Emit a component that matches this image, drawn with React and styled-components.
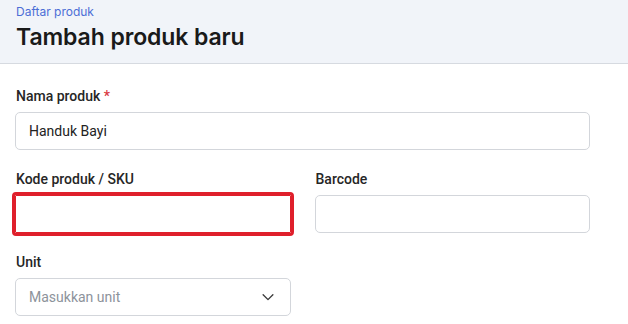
import React from "react";
import styled, { createGlobalStyle } from "styled-components";

const Global = createGlobalStyle`
  html, body { margin: 0; padding: 0; background: #ffffff; }
  * { box-sizing: border-box; }
`;

const Page = styled.div`
  width: 628px;
  min-height: 324px;
  background: #ffffff;
  font-family: Roboto, "Liberation Sans", sans-serif;
`;

const Header = styled.header`
  height: 64px;
  background: #f1f4f9;
  border-bottom: 1px solid #d6dae0;
  padding: 5px 16px 0;
  display: flex;
  flex-direction: column;
  font-family: Inter, "Liberation Sans", sans-serif;
`;

const Crumb = styled.a`
  font-size: 12px;
  line-height: 14px;
  color: #4c6ed6;
  text-decoration: none;
`;

const Title = styled.h1`
  margin: 4px 0 0;
  font-size: 23px;
  line-height: 29px;
  font-weight: 600;
  color: #1a1a1a;
  letter-spacing: -0.1px;
`;

const Form = styled.form`
  width: 590px;
  padding: 24px 0 0 15px;
  display: flex;
  flex-direction: column;
  gap: 21px;
`;

const Row = styled.div`
  display: grid;
  grid-template-columns: ${(p) => p.$cols || "1fr"};
  column-gap: 24px;
`;

const Field = styled.div`
  display: flex;
  flex-direction: column;
  gap: 8px;
`;

const Label = styled.label`
  font-size: 14px;
  line-height: 16px;
  font-weight: 500;
  color: #262626;
  padding-left: 1px;
`;

const Star = styled.span`
  color: #d9383f;
`;

const Input = styled.input`
  height: 38px;
  width: 100%;
  border: 1px solid #d3d6db;
  border-radius: 5px;
  padding: 0 13px;
  font-family: Roboto, "Liberation Sans", sans-serif;
  font-size: 14px;
  color: #222222;
  background: #ffffff;
  outline: ${(p) => (p.$error ? "3px solid #df1f2b" : "none")};
  ${(p) => p.$error && "border-radius: 1px; border-color: #df1f2b;"}
  &::placeholder { color: #8d939b; }
`;

const SelectBox = styled.div`
  height: 38px;
  border: 1px solid #d3d6db;
  border-radius: 5px;
  padding: 0 13px;
  display: flex;
  align-items: center;
  justify-content: space-between;
  font-size: 14px;
  color: #8d939b;
  background: #ffffff;
`;

const Chevron = styled.svg`
  width: 18px;
  height: 18px;
  margin-right: 0;
`;

export default function App() {
  return (
    <Page>
      <Global />
      <Header>
        <Crumb href="#">Daftar produk</Crumb>
        <Title>Tambah produk baru</Title>
      </Header>
      <Form onSubmit={(e) => e.preventDefault()}>
        <Field>
          <Label>
            Nama produk <Star>*</Star>
          </Label>
          <Input defaultValue="Handuk Bayi" />
        </Field>
        <Row $cols="1fr 1fr">
          <Field>
            <Label>Kode produk / SKU</Label>
            <Input $error />
          </Field>
          <Field>
            <Label>Barcode</Label>
            <Input />
          </Field>
        </Row>
        <Row $cols="1fr 1fr">
          <Field>
            <Label>Unit</Label>
            <SelectBox>
              <span>Masukkan unit</span>
              <Chevron viewBox="0 0 24 24" fill="none" stroke="#3a3a3a" strokeWidth="1.8" strokeLinecap="round" strokeLinejoin="round">
                <path d="M5.5 9l6.5 6.5 6.5-6.5" />
              </Chevron>
            </SelectBox>
          </Field>
        </Row>
      </Form>
    </Page>
  );
}
